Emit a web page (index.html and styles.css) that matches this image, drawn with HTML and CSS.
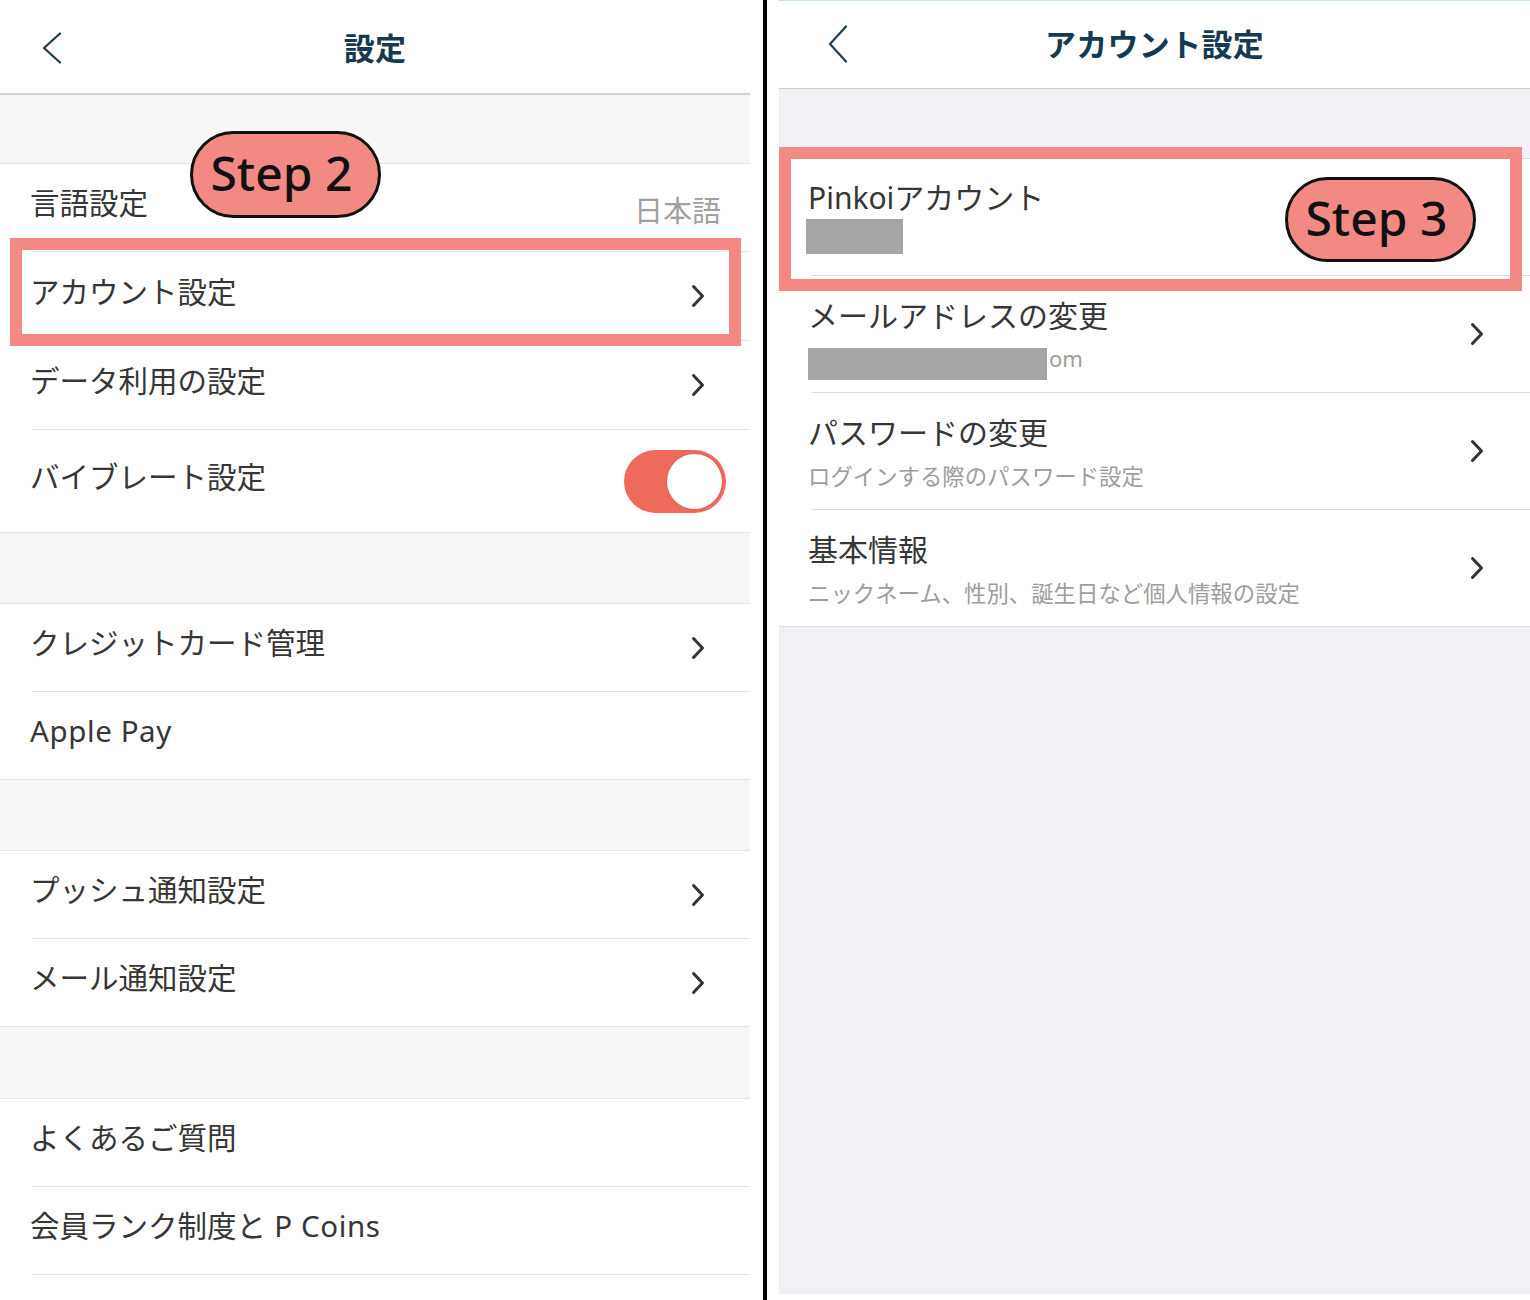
FILE: index.html
```html
<!DOCTYPE html>
<html lang="ja">
<head>
<meta charset="utf-8">
<title>設定</title>
<link rel="stylesheet" href="styles.css">
</head>
<body>
<div class="page">
  <section class="panel left">
    <header class="nav nav-left">
      <div class="nav-side"><svg class="back" width="22" height="32" viewBox="0 0 22 32"><polyline points="19,1.5 3,16 19,30.5" fill="none" stroke="#1b3c54" stroke-width="2.2" stroke-linecap="round" stroke-linejoin="round"/></svg></div>
      <h1 class="title">設定</h1>
      <div class="nav-side"></div>
    </header>
    <div class="gap gap-first"></div>
    <div class="group">
      <div class="row"><div class="row-inner"><span class="label">言語設定</span><span class="value">日本語</span></div></div>
      <div class="row"><div class="row-inner row-89"><span class="label">アカウント設定</span><svg class="chev" width="16" height="24" viewBox="0 0 16 24"><polyline points="3.5,2.5 12.5,12 3.5,21.5" fill="none" stroke="#333" stroke-width="3" stroke-linecap="round" stroke-linejoin="round"/></svg></div></div>
      <div class="row"><div class="row-inner row-89"><span class="label">データ利用の設定</span><svg class="chev" width="16" height="24" viewBox="0 0 16 24"><polyline points="3.5,2.5 12.5,12 3.5,21.5" fill="none" stroke="#333" stroke-width="3" stroke-linecap="round" stroke-linejoin="round"/></svg></div></div>
      <div class="row"><div class="row-inner row-tall last"><span class="label">バイブレート設定</span><div class="toggle"><div class="knob"></div></div></div></div>
    </div>
    <div class="gap"></div>
    <div class="group">
      <div class="row"><div class="row-inner"><span class="label">クレジットカード管理</span><svg class="chev" width="16" height="24" viewBox="0 0 16 24"><polyline points="3.5,2.5 12.5,12 3.5,21.5" fill="none" stroke="#333" stroke-width="3" stroke-linecap="round" stroke-linejoin="round"/></svg></div></div>
      <div class="row"><div class="row-inner last"><span class="label latin">Apple Pay</span></div></div>
    </div>
    <div class="gap"></div>
    <div class="group">
      <div class="row"><div class="row-inner"><span class="label">プッシュ通知設定</span><svg class="chev" width="16" height="24" viewBox="0 0 16 24"><polyline points="3.5,2.5 12.5,12 3.5,21.5" fill="none" stroke="#333" stroke-width="3" stroke-linecap="round" stroke-linejoin="round"/></svg></div></div>
      <div class="row"><div class="row-inner last"><span class="label">メール通知設定</span><svg class="chev" width="16" height="24" viewBox="0 0 16 24"><polyline points="3.5,2.5 12.5,12 3.5,21.5" fill="none" stroke="#333" stroke-width="3" stroke-linecap="round" stroke-linejoin="round"/></svg></div></div>
    </div>
    <div class="gap gap-last"></div>
    <div class="group">
      <div class="row"><div class="row-inner"><span class="label">よくあるご質問</span></div></div>
      <div class="row"><div class="row-inner"><span class="label">会員ランク制度と<span class="latin"> P Coins</span></span></div></div>
      <div class="row"><div class="row-inner last"></div></div>
    </div>

    <div class="highlight hl-left"></div>
    <div class="badge badge-2">Step 2</div>
  </section>

  <div class="divider"></div>

  <section class="panel right">
    <header class="nav nav-right">
      <div class="nav-side"><svg class="back back-r" width="22" height="38" viewBox="0 0 22 38"><polyline points="19,1.5 3,19 19,36.5" fill="none" stroke="#1b3c54" stroke-width="2.2" stroke-linecap="round" stroke-linejoin="round"/></svg></div>
      <h1 class="title">アカウント設定</h1>
      <div class="nav-side"></div>
    </header>
    <div class="rgap"></div>
    <div class="rgroup">
      <div class="rrow"><div class="rrow-inner">
        <div class="rtext">
          <div class="rlabel">Pinkoiアカウント</div>
          <div class="rsub"><span class="redact redact-name"></span></div>
        </div>
      </div></div>
      <div class="rrow"><div class="rrow-inner">
        <div class="rtext">
          <div class="rlabel">メールアドレスの変更</div>
          <div class="rsub"><span class="redact redact-mail"></span><span class="om">om</span></div>
        </div>
        <svg class="rchev" width="16" height="24" viewBox="0 0 16 24"><polyline points="3.5,2.5 12.5,12 3.5,21.5" fill="none" stroke="#333" stroke-width="3" stroke-linecap="round" stroke-linejoin="round"/></svg>
      </div></div>
      <div class="rrow"><div class="rrow-inner">
        <div class="rtext">
          <div class="rlabel">パスワードの変更</div>
          <div class="rsub">ログインする際のパスワード設定</div>
        </div>
        <svg class="rchev" width="16" height="24" viewBox="0 0 16 24"><polyline points="3.5,2.5 12.5,12 3.5,21.5" fill="none" stroke="#333" stroke-width="3" stroke-linecap="round" stroke-linejoin="round"/></svg>
      </div></div>
      <div class="rrow"><div class="rrow-inner last">
        <div class="rtext">
          <div class="rlabel">基本情報</div>
          <div class="rsub">ニックネーム、性別、誕生日など個人情報の設定</div>
        </div>
        <svg class="rchev" width="16" height="24" viewBox="0 0 16 24"><polyline points="3.5,2.5 12.5,12 3.5,21.5" fill="none" stroke="#333" stroke-width="3" stroke-linecap="round" stroke-linejoin="round"/></svg>
      </div></div>
    </div>

    <div class="highlight hl-right"></div>
    <div class="badge badge-3">Step 3</div>
  </section>
</div>
</body>
</html>
```
FILE: styles.css
```css
* { box-sizing: border-box; }
html, body { margin: 0; padding: 0; background: #fff; }
body {
  font-family: "Noto Sans", "Noto Sans CJK JP", sans-serif;
  color: #333;
}
.page {
  display: flex;
  width: 1530px;
  height: 1300px;
  overflow: hidden;
  background: #fff;
}
.panel { position: relative; flex: none; }
.left { width: 750px; height: 1300px; background: #fff; }
.divider { flex: none; width: 4px; height: 1300px; background: #000; margin-left: 13px; margin-right: 12px; }
.right { width: 751px; height: 1294px; background: #f0f0f5; align-self: flex-start; }

/* nav */
.nav {
  display: grid;
  grid-template-columns: 1fr auto 1fr;
  align-items: center;
  background: #fff;
}
.nav-left { height: 95px; border-bottom: 2px solid #d2d2d2; }
.nav-right { height: 89px; border-top: 1px solid #c4ecc6; border-bottom: 1px solid #cdcdcd; padding-bottom: 3px; }
.nav-side { display: flex; align-items: center; }
.back { display: block; margin-left: 41px; margin-top: 2px; }
.back-r { margin-left: 48px; margin-top: 2px; }
.title {
  margin: 0;
  font-family: "Noto Sans CJK JP", sans-serif;
  font-weight: 700;
  font-size: 31px;
  line-height: 40px;
  color: #163a52;
  letter-spacing: 0.3px;
}

/* left list */
.gap { height: 71px; background: #f7f7f7; border-bottom: 1px solid #e4e4e4; }
.gap-first { height: 69px; }
.gap-last { height: 72px; }
.group { background: #fff; border-bottom: 1px solid #e4e4e4; }
.row { padding-left: 32px; }
.row-inner {
  display: flex;
  align-items: center;
  height: 88px;
  border-bottom: 1px solid #e4e4e4;
}
.row-inner.row-89 { height: 89px; }
.row-inner.last { border-bottom: none; height: 87px; }
.row-inner.row-tall { height: 102px; }
.label {
  margin-left: -2px;
  font-size: 29.5px;
  line-height: 40px;
  color: #363636;
  padding-bottom: 9px;
}
.latin { letter-spacing: 0.6px; }
.value {
  margin-left: auto;
  margin-right: 29px;
  font-family: "Noto Sans CJK JP", sans-serif;
  font-size: 29px;
  line-height: 40px;
  color: #a0a0a0;
  margin-top: 2px;
}
.chev { display: block; margin-left: auto; margin-right: 44px; flex: none; }
.toggle {
  margin-left: auto;
  margin-right: 24px;
  width: 102px;
  height: 63px;
  border-radius: 32px;
  background: #ee6a5a;
  display: flex;
  align-items: center;
  justify-content: flex-end;
  padding: 4px;
}
.knob {
  width: 55px;
  height: 55px;
  border-radius: 50%;
  background: #fff;
  box-shadow: 0 0 0 1px rgba(200, 80, 70, 0.35);
}

/* right list */
.rgap { height: 70px; border-bottom: 1px solid #dcdcdc; }
.rgroup { background: #fff; border-bottom: 1px solid #dcdcdc; }
.rrow { padding-left: 33px; }
.rrow-inner {
  display: flex;
  align-items: center;
  height: 117px;
  border-bottom: 1px solid #dcdcdc;
}
.rrow-inner.last { border-bottom: none; height: 116px; }
.rtext { flex: 1; margin-left: -4px; }
.rlabel { font-size: 30px; line-height: 40px; color: #363636; }
.rsub {
  display: flex;
  align-items: flex-start;
  margin-top: 7px;
  font-size: 22.4px;
  line-height: 30px;
  color: #9d9d9d;
  font-family: "Noto Sans CJK JP", sans-serif;
}
.om { font-family: "Noto Sans", sans-serif; font-size: 22px; }
.redact { display: block; background: #a5a5a5; flex: none; }
.redact-name { width: 97px; height: 35px; margin-left: -2px; margin-top: -6px; margin-bottom: 3px; }
.redact-mail { width: 239px; height: 32px; margin-top: 5px; margin-bottom: -7px; margin-right: 2px; }
.rchev { display: block; flex: none; margin-right: 45px; }

/* overlays */
.highlight { position: absolute; border: 12px solid #f28a83; }
.hl-left { left: 10px; top: 238px; width: 731px; height: 108px; }
.hl-right { left: 0; top: 147px; width: 743px; height: 144px; }
.badge {
  position: absolute;
  display: flex;
  align-items: center;
  justify-content: center;
  width: 191px;
  height: 87px;
  border: 3px solid #111;
  border-radius: 44px;
  background: #f28a83;
  font-family: "Noto Sans", sans-serif;
  font-weight: 500;
  font-size: 48px;
  line-height: 1;
  color: #111;
  padding-bottom: 4px;
  padding-right: 8px;
}
.badge-2 { left: 190px; top: 131px; }
.badge-3 { left: 506px; top: 177px; height: 85px; }
```
